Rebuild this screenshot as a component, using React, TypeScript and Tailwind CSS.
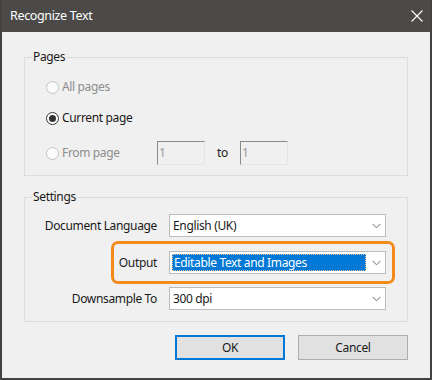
import React from 'react';

const Radio = ({ checked = false, disabled = false, label }: { checked?: boolean; disabled?: boolean; label: string }) => (
  <div className="flex items-center h-[20px]">
    <span
      className={`w-[13px] h-[13px] rounded-full border flex items-center justify-center ${
        disabled ? 'border-[#c4c4c4] bg-[#fbfbfb]' : 'border-[#333333] bg-white'
      }`}
    >
      {checked && <span className="w-[7px] h-[7px] rounded-full bg-[#333333]" />}
    </span>
    <span className={`ml-[3px] ${disabled ? 'text-[#8d8d8d]' : 'text-[#1a1a1a]'}`}>{label}</span>
  </div>
);

const Chevron = () => (
  <svg width="9" height="6" viewBox="0 0 9 6" className="block">
    <path d="M0.5 0.8 L4.5 4.8 L8.5 0.8" fill="none" stroke="#6b6b6b" strokeWidth="1" />
  </svg>
);

const Combo = ({ value, selected = false }: { value: string; selected?: boolean }) => (
  <div className="w-[217px] h-[23px] border border-[#bcbcbc] bg-white p-[2px] flex">
    <div
      className={`w-[194px] h-[17px] flex items-center pl-[1px] ${
        selected ? 'bg-[#0078d7] text-white border border-dotted border-[#e9c38f]' : 'text-[#1a1a1a]'
      }`}
    >
      {value}
    </div>
    <div className="flex-1 flex items-center justify-center pl-[3px]">
      <Chevron />
    </div>
  </div>
);

const SunkenInput = ({ value }: { value: string }) => (
  <div className="w-[48px] h-[24px] border border-t-[#8a8a8a] border-l-[#8a8a8a] border-r-[#e6e6e6] border-b-[#e6e6e6] bg-[#f0f0f0] pl-[1px] flex items-center text-[#9a9a9a]">
    {value}
  </div>
);

const GroupBox = ({ title, height, children }: { title: string; height: string; children: React.ReactNode }) => (
  <div className={`relative w-[384px] ${height} border border-[#dcdcdc]`}>
    <span className="absolute left-[7px] -top-[9px] px-[1px] leading-[16px] bg-[#f0f0f0] text-[#1a1a1a]">{title}</span>
    {children}
  </div>
);

export default function App() {
  return (
    <div className="w-[432px] h-[380px] bg-[#434240] border-x-2 border-b-2 border-[#434240] flex flex-col font-['Noto_Sans',sans-serif] text-[12px] leading-[16px] tracking-[-0.35px]">
      {/* Title bar */}
      <div className="h-[32px] flex items-center justify-between pl-[8px] pr-[7px] bg-[#4b4a48] text-white">
        <span className="text-[12.5px]">Recognize Text</span>
        <svg width="12" height="12" viewBox="0 0 12 12" className="block">
          <path d="M0.5 0.5 L11.5 11.5 M11.5 0.5 L0.5 11.5" stroke="#ffffff" strokeWidth="1.1" />
        </svg>
      </div>

      {/* Body */}
      <div className="flex-1 bg-[#f0f0f0] pl-[22px] pt-[25px]">
        <GroupBox title="Pages" height="h-[119px]">
          <div className="flex flex-col pl-[21px] pt-[19px]">
            <Radio disabled label="All pages" />
            <div className="mt-[11px]">
              <Radio checked label="Current page" />
            </div>
            <div className="mt-[13px] flex items-center h-[24px]">
              <div className="w-[111px]">
                <Radio disabled label="From page" />
              </div>
              <SunkenInput value="1" />
              <span className="ml-[12px] w-[23px] text-[#1a1a1a]">to</span>
              <SunkenInput value="1" />
            </div>
          </div>
        </GroupBox>

        <div className="mt-[21px]">
          <GroupBox title="Settings" height="h-[125px]">
            <div className="flex flex-col pt-[16px]">
              <div className="flex items-center h-[23px]">
                <span className="w-[132px] text-right text-[#1a1a1a]">Document Language</span>
                <div className="ml-[12px]">
                  <Combo value="English (UK)" />
                </div>
              </div>
              <div className="flex items-center h-[23px] mt-[14px]">
                <span className="w-[132px] text-right text-[#1a1a1a]">Output</span>
                <div className="ml-[12px]">
                  <Combo value="Editable Text and Images" selected />
                </div>
              </div>
              <div className="flex items-center h-[23px] mt-[13px]">
                <span className="w-[132px] text-right text-[#1a1a1a]">Downsample To</span>
                <div className="ml-[12px]">
                  <Combo value="300 dpi" />
                </div>
              </div>
            </div>
            {/* highlight annotation */}
            <div className="absolute left-[86px] top-[43px] w-[284px] h-[43px] border-[3px] border-[#f28b1b] rounded-[7px]" />
          </GroupBox>
        </div>

        <div className="w-[384px] mt-[13px] flex justify-end gap-[13px]">
          <button className="w-[110px] h-[25px] bg-[#e1e1e1] border-2 border-[#0078d7] text-[#1a1a1a]">OK</button>
          <button className="w-[110px] h-[25px] bg-[#e1e1e1] border border-[#adadad] text-[#1a1a1a]">Cancel</button>
        </div>
      </div>
    </div>
  );
}
